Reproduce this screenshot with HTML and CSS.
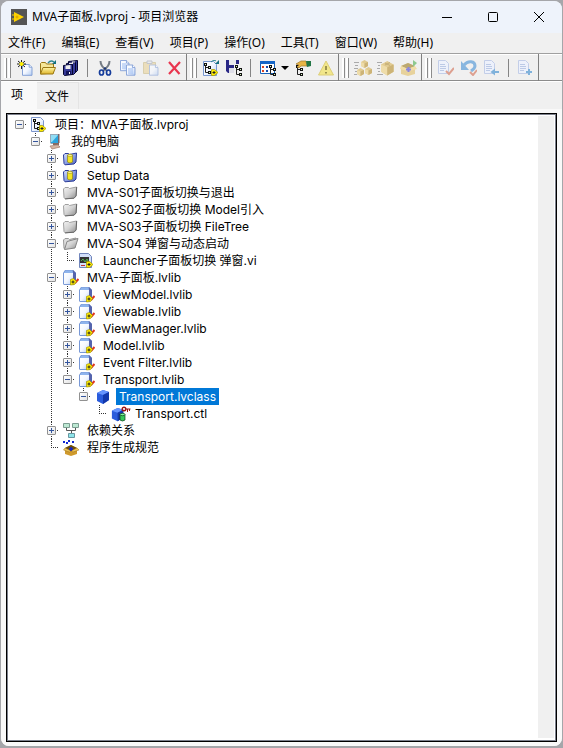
FILE: index.html
```html
<!DOCTYPE html>
<html lang="zh-CN">
<head>
<meta charset="utf-8">
<title>MVA子面板.lvproj - 项目浏览器</title>
<link rel="stylesheet" href="styles.css">
</head>
<body>
<svg class="defs" aria-hidden="true">
  <defs>
    <linearGradient id="metal" x1="0" y1="0" x2="1" y2="1"><stop offset="0" stop-color="#f4f4f4"/><stop offset=".5" stop-color="#d2d2d2"/><stop offset="1" stop-color="#8c8c8c"/></linearGradient>
    <linearGradient id="sheet" x1="0" y1="0" x2="1" y2="1"><stop offset="0" stop-color="#fff"/><stop offset=".5" stop-color="#f3f7ff"/><stop offset="1" stop-color="#b4cdf3"/></linearGradient>
    <linearGradient id="blue" x1="0" y1="0" x2="1" y2="1"><stop offset="0" stop-color="#dfe7ff"/><stop offset=".5" stop-color="#8ea2e6"/><stop offset="1" stop-color="#4c60b8"/></linearGradient>
    <linearGradient id="gold" x1="0" y1="0" x2="0" y2="1"><stop offset="0" stop-color="#fff7a6"/><stop offset="1" stop-color="#dfb52c"/></linearGradient>
    <g id="page"><path d="M0 0h7l3 3v9H0z" fill="url(#sheet)" stroke="#7d9bd4"/><path d="M7 0v3h3" fill="#fff" stroke="#7d9bd4"/></g>
    <g id="twigs"><path d="M1.500 1v8.500h4M1.500 4.500h4" fill="none" stroke="#222"/><path d="M0 0h3v3H0zM4 3h3v3H4zM4 8h3v3H4z" fill="#111"/><path d="M1 1h1v1H1zM5 4h1v1H5zM5 9h1v1H5z" fill="#d9f5c4"/></g>
    <g id="node"><path d="M.5.500h3L7 3.500 3.500 6.500h-3z" fill="#ffed00" stroke="#a39300" stroke-width=".7"/><path d="M1.500 3.500h3M3 2v3" stroke="#222"/></g>
    <g id="box"><path d="M0 2l3.500-2L7 2v4L3.500 8 0 6z" fill="#e1cb92"/><path d="M0 2l3.500 1.500V8L0 6z" fill="#eedca9"/><path d="M3.500 3.500L7 2v4L3.500 8z" fill="#cdb477"/></g>
    <g id="cube"><path d="M2 4l6-3 6 2v8l-6 4-6-3z" fill="#2a5cdc"/><path d="M2 4l6-3 6 2-6 3z" fill="#6594ff"/><path d="M8 6l6-3v8l-6 4z" fill="#1238ac"/></g>

    <symbol id="i-labview" viewBox="0 0 16 16"><path d="M0 0h16v16H0z" fill="#555"/><path d="M3 3l10 5-10 5z" fill="#ffd300"/><path d="M1 6h3M1 10h3" stroke="#ffd300"/><path d="M4.500 8h3M6 6.500v3" stroke="#d69e00"/></symbol>
    <symbol id="i-new" viewBox="0 0 16 16"><use href="#page" transform="translate(5.500 4.500) scale(.95 .9)"/><path d="M0 4h9M4.500 0v9M1 1l7 6M8 1L1 7" stroke="#222"/><path d="M2.500 4h4M4.500 2v4" stroke="#fff000" stroke-width="2"/></symbol>
    <symbol id="i-open" viewBox="0 0 16 16"><path d="M.5 14V3.500l1-1h4l1 1.500h7V13z" fill="#f5e798" stroke="#9a7815"/><path d="M.5 14L3 7.500h12.500L13 14z" fill="url(#gold)" stroke="#9a7815"/><path d="M8 3c2-2.500 4-2.500 6-1" fill="none" stroke="#318993" stroke-width="1.300"/><path d="M16 0v4h-4z" fill="#137080"/></symbol>
    <symbol id="i-saveall" viewBox="0 0 16 16"><g stroke="#05052e" fill="#363a98"><path d="M5.500 1.500l9-1v10l-2 2h-7z"/><path d="M3.500 3.500l9-1v10l-2 2h-7z"/><path d="M.5 5.500l9-1v10l-8 1-1-1z"/></g><path d="M2.500 5.500l5-.5v4h-5zM6 3l4-.5v1.500H6zM9 1.500h3v1H9z" fill="#eee"/><path d="M3 11h5v4H3z" fill="#151558"/><path d="M6 12h1v2H6z" fill="#fff"/></symbol>
    <symbol id="i-cut" viewBox="0 0 16 16"><path d="M3.500 1c0 4 2 6 6.500 10M12.500 1c0 4-2 6-6.500 10" fill="none" stroke="#747b84" stroke-width="2"/><ellipse cx="4.500" cy="12.500" rx="2" ry="2.500" fill="none" stroke="#153c9b" stroke-width="1.700"/><ellipse cx="11.500" cy="12.500" rx="2" ry="2.500" fill="none" stroke="#153c9b" stroke-width="1.700"/><circle cx="8" cy="8.500" r="1.200" fill="#19367a"/></symbol>
    <symbol id="i-copy" viewBox="0 0 16 16"><use href="#page" transform="translate(.5 .5) scale(.85)"/><use href="#page" transform="translate(6.500 5) scale(.85)"/><path d="M2 4h4M2 6h4M2 8h4M8 9h5M8 11h5M8 13h5" stroke="#9abaf0"/></symbol>
    <symbol id="i-paste" viewBox="0 0 16 16"><path d="M.5 2.500h12v11H.5z" fill="#e8d39b" stroke="#caba83"/><path d="M4 3.500V1h5v2.500z" fill="#e5e8ed" stroke="#a6abb9"/><use href="#page" transform="translate(6.500 5) scale(.85)"/></symbol>
    <symbol id="i-delete" viewBox="0 0 16 16"><path d="M3 2l10.500 12M14 2L3 14" stroke="#e9364f" stroke-width="2.200"/></symbol>
    <symbol id="i-projopen" viewBox="0 0 16 16"><path d="M.5 1.500h10l3 3v11H.5z" fill="url(#sheet)" stroke="#7898d0"/><use href="#twigs" transform="translate(1 3)"/><use href="#node" x="8" y="9"/><path d="M8 2c2-2 4-2 5-1" fill="none" stroke="#318993"/><path d="M16 0v4h-4z" fill="#137080"/></symbol>
    <symbol id="i-projsave" viewBox="0 0 16 16"><path d="M0 0h13v13H2l-2-2z" fill="#292785"/><path d="M3 0h7v5H3z" fill="#e9e9ef"/><path d="M3 8h6v5H3z" fill="#dddde7"/><path d="M8 4h8v12H8z" fill="#efefef"/><use href="#twigs" transform="translate(9 5)"/></symbol>
    <symbol id="i-window" viewBox="0 0 16 16"><path d="M.5 1.500h14v12H.5z" fill="#fff" stroke="#1762b8"/><path d="M0 1h15v3H0z" fill="#1767c7"/><path d="M2 6h2v2H2zM2 10h2v2H2z" fill="#da4423"/><path d="M6 6h2v2H6zM6 10h2v2H6zM10 6h2v2h-2z" fill="#184aad"/><use href="#twigs" transform="translate(9 5)"/></symbol>
    <symbol id="i-hand" viewBox="0 0 16 16"><use href="#twigs" transform="translate(1 5)"/><path d="M1 4l5-3h5l1 5H6L4 8 2 7l2-2z" fill="#e9b544" stroke="#a17a2c" stroke-width=".7"/><path d="M11 1h5v5l-4 1z" fill="#237645"/></symbol>
    <symbol id="i-warn" viewBox="0 0 16 16"><path d="M8 1l7.500 14H.5z" fill="#f1e68a" stroke="#dcce78"/><path d="M8 6v4M8 12v1.500" stroke="#877e40" stroke-width="1.600"/></symbol>
    <symbol id="i-boxes" viewBox="0 0 18 16"><path d="M0 2.500h5M1 5.500h3M0 8.500h4M1 11.500h2M0 14.500h3" stroke="#aaa"/><use href="#box" x="7" y="0"/><use href="#box" x="3" y="8"/><use href="#box" x="11" y="7"/></symbol>
    <symbol id="i-box" viewBox="0 0 18 16"><path d="M0 2.500h5M1 5.500h2M0 8.500h3M1 11.500h2M0 14.500h6" stroke="#aaa"/><use href="#box" transform="translate(4 1) scale(1.800)"/><path d="M8 3l5 2.500M13 2.500L8 5" stroke="#c6b078"/></symbol>
    <symbol id="i-boxout" viewBox="0 0 18 16"><path d="M1 6l7-3 7 3v8l-7 2-7-2z" fill="#e7d29c"/><path d="M1 6l7 3 7-3-7-3z" fill="#bca870"/><path d="M1 6l-1 3 7 2 1-2zM15 6l2 3-7 2-2-2z" fill="#f1dda8"/><path d="M6 9.500h5M8.500 7v5" stroke="#8a85e0" stroke-width="2"/><path d="M13 0l4 3-4 4z" fill="#8ec98f"/></symbol>
    <g id="paleform"><path d="M.5.500h7l3 3v10H.5z" fill="#edf1fb" stroke="#c3cee8"/><path d="M2 4.500h5M2 6.500h6M2 8.500h6M2 10.500h4" stroke="#bccae6"/></g>
    <symbol id="i-check" viewBox="0 0 16 16"><use href="#paleform"/><path d="M8 11l3 3 5-6" fill="none" stroke="#dda090" stroke-width="2"/></symbol>
    <symbol id="i-undo" viewBox="0 0 16 16"><path d="M3 5c4-5 11-4 11 1 0 2-1 3-4 5" fill="none" stroke="#88b6df" stroke-width="3"/><path d="M0 1v9h8z" fill="#88b6df"/><path d="M9 12l3 3 4-5" fill="none" stroke="#dda090" stroke-width="2"/></symbol>
    <symbol id="i-back" viewBox="0 0 16 16"><use href="#paleform"/><path d="M15 12H9" stroke="#80b2db" stroke-width="2"/><path d="M11 8.500v7L6.500 12z" fill="#80b2db"/></symbol>
    <symbol id="i-add" viewBox="0 0 16 16"><use href="#paleform"/><path d="M8 12h6M11 9v6" stroke="#80b2db" stroke-width="2"/></symbol>

    <symbol id="i-project" viewBox="0 0 16 16"><path d="M.5.500h9l3 3v11H.5z" fill="url(#sheet)" stroke="#7c96cc"/><use href="#twigs" transform="translate(2 2)"/><use href="#node" x="8" y="8"/></symbol>
    <symbol id="i-computer" viewBox="0 0 16 16"><path d="M3 0h9v9l-1 1H4L3 9z" fill="#93a9bb"/><path d="M4 1h7v8H4z" fill="#2aa5df"/><path d="M4 1h7L5 8H4z" fill="#8fdcf4"/><path d="M11 0h1.500v9H11z" fill="#77656a"/><path d="M6 9h6v2H6z" fill="#876b62"/><path d="M3 12l8-1 2 2-8 2z" fill="#d5b6a3" stroke="#a88476" stroke-width=".8"/></symbol>
    <symbol id="i-autofolder" viewBox="0 0 16 16"><path d="M1 12.500L.5 4 2 2.500h3.500l1 1L13.500 2l-.5 9-2 2-9 .8z" fill="url(#blue)" stroke="#2a3b98"/><path d="M4.500 4v7q2.500 2 5 0V4q-2.500-2-5 0z" fill="#f4e621" stroke="#8f8418" stroke-width=".7"/><ellipse cx="7" cy="4.500" rx="2.300" ry="1" fill="#fff99d" stroke="#8f8418" stroke-width=".5"/></symbol>
    <symbol id="i-folder" viewBox="0 0 16 16"><path d="M1 12.500L.5 4 2 2.500h3.500l1 1L13.500 2l-.5 9-2 2-9 .8z" fill="url(#metal)" stroke="#a0a0a0"/><path d="M13.700 2l-.6 9-2 2.200-9 .7" fill="none" stroke="#666"/></symbol>
    <symbol id="i-folderopen" viewBox="0 0 16 16"><path d="M1 12.500L.5 4 2 2.500h3.500l1 1L13 2v3z" fill="#ddd" stroke="#999"/><path d="M1.500 13.500L4 5.500 15 2.500l-3 9.500z" fill="url(#metal)" stroke="#858585"/></symbol>
    <symbol id="i-vi" viewBox="0 0 16 16"><path d="M.5.500h9l3 3v11H.5z" fill="#d3e0fa" stroke="#7185bb"/><path d="M1 4h9v6H1z" fill="#333"/><path d="M2 8l2-2 2 3 2-3 1 2" fill="none" stroke="#53b653"/><path d="M2 12.500h4" stroke="#c62f2f"/><use href="#node" x="7" y="8"/></symbol>
    <symbol id="i-library" viewBox="0 0 16 16"><path d="M0 3l2-3h8l3 3v10l-3 2H1l-1-1z" fill="#7898d6"/><path d="M10 3V0l3 3v10l-3 2z" fill="#5564ad"/><path d="M1 3h9v11H1z" fill="url(#sheet)"/><path d="M1 3l1.500-2.500H9L10 3z" fill="#8eb4ed"/><path d="M12 13l3.500-4" stroke="#e03621" stroke-width="2"/><path d="M7.500 9.500l3-1 3 3-2 3-4 .5z" fill="#ffed00" stroke="#a39300" stroke-width=".7"/><path d="M8.500 12h3M10 10.500v3" stroke="#222"/></symbol>
    <symbol id="i-class" viewBox="0 0 16 16"><use href="#cube"/></symbol>
    <symbol id="i-control" viewBox="0 0 20 16"><use href="#cube" transform="translate(-1 1) scale(.95)"/><path d="M9 8.500v5.500q2.500 2 5 0V8.500z" fill="#36c75b" stroke="#093c17" stroke-width=".7"/><ellipse cx="11.500" cy="8.500" rx="2.500" ry="1.200" fill="#7cf399" stroke="#093c17" stroke-width=".7"/><circle cx="13" cy="3" r="1.800" fill="none" stroke="#9b1515" stroke-width="1.400"/><path d="M15 3h4.500M16.500 3v3M18.500 3v2" stroke="#9b1515"/></symbol>
    <symbol id="i-deps" viewBox="0 0 16 16"><path d="M3.500 5v2.500h9V5M8.500 7v4" fill="none" stroke="#555"/><path d="M.5.500h6v4h-6zM9.500.500h6v4h-6z" fill="#bde9d3" stroke="#7d9e92"/><path d="M5.500 10.500h6v4h-6z" fill="#8ee5ea" stroke="#6796a0"/></symbol>
    <symbol id="i-build" viewBox="0 0 16 16"><path d="M2 8l6-3 6 3v6l-6 2-6-2z" fill="#d09a2c"/><path d="M2 8l6 3 6-3-6-3z" fill="#6b4e10"/><path d="M2 8l-1.500 2 6 2L8 11zM14 8l2 2-6 2-2-1z" fill="#efc95f" stroke="#9a6f18" stroke-width=".5"/><path d="M6 9h4M8 7v4" stroke="#1523c8" stroke-width="1.500"/><path d="M0 1h2v2H0zM5 0h2v2H5zM9 1h2v2H9zM3 2h2v2H3z" fill="#1026d2"/></symbol>
  </defs>
</svg>
<main class="window">
  <header class="titlebar">
    <svg class="icon"><use href="#i-labview"/></svg>
    <h1 class="title">MVA子面板.lvproj - 项目浏览器</h1>
    <button class="caption" aria-label="最小化"><svg class="glyph" viewBox="0 0 12 12"><path d="M1 6.500h10"/></svg></button>
    <button class="caption" aria-label="最大化"><svg class="glyph" viewBox="0 0 12 12"><rect x="1.500" y="1.500" width="9" height="9" rx="1"/></svg></button>
    <button class="caption" aria-label="关闭"><svg class="glyph" viewBox="0 0 12 12"><path d="M1 1l10 10M11 1L1 11"/></svg></button>
  </header>
  <nav class="menubar">
    <button class="menu">文件(F)</button><button class="menu">编辑(E)</button><button class="menu">查看(V)</button><button class="menu">项目(P)</button><button class="menu">操作(O)</button><button class="menu">工具(T)</button><button class="menu">窗口(W)</button><button class="menu">帮助(H)</button>
  </nav>
  <div class="toolbar">
    <div class="group">
      <button class="tool" aria-label="新建"><svg class="icon"><use href="#i-new"/></svg></button>
      <button class="tool" aria-label="打开"><svg class="icon"><use href="#i-open"/></svg></button>
      <button class="tool" aria-label="全部保存"><svg class="icon"><use href="#i-saveall"/></svg></button>
      <span class="separator"></span>
      <button class="tool" aria-label="剪切"><svg class="icon"><use href="#i-cut"/></svg></button>
      <button class="tool" aria-label="复制"><svg class="icon"><use href="#i-copy"/></svg></button>
      <button class="tool" aria-label="粘贴" disabled><svg class="icon faded"><use href="#i-paste"/></svg></button>
      <button class="tool" aria-label="删除"><svg class="icon"><use href="#i-delete"/></svg></button>
    </div>
    <div class="group">
      <button class="tool" aria-label="打开项目"><svg class="icon"><use href="#i-projopen"/></svg></button>
      <button class="tool" aria-label="保存项目"><svg class="icon"><use href="#i-projsave"/></svg></button>
      <span class="separator"></span>
      <button class="tool" aria-label="筛选"><svg class="icon"><use href="#i-window"/></svg></button>
      <button class="tool drop" aria-label="筛选选项"><svg class="arrow" viewBox="0 0 8 4"><path d="M0 0h8L4 4z"/></svg></button>
      <button class="tool" aria-label="属性"><svg class="icon"><use href="#i-hand"/></svg></button>
      <button class="tool" aria-label="冲突" disabled><svg class="icon"><use href="#i-warn"/></svg></button>
    </div>
    <div class="group">
      <button class="tool" aria-label="全部生成" disabled><svg class="icon wide"><use href="#i-boxes"/></svg></button>
      <button class="tool" aria-label="生成" disabled><svg class="icon wide"><use href="#i-box"/></svg></button>
      <button class="tool" aria-label="部署" disabled><svg class="icon wide"><use href="#i-boxout"/></svg></button>
    </div>
    <div class="group">
      <button class="tool" aria-label="签出" disabled><svg class="icon"><use href="#i-check"/></svg></button>
      <button class="tool" aria-label="撤消签出" disabled><svg class="icon"><use href="#i-undo"/></svg></button>
      <button class="tool" aria-label="签入" disabled><svg class="icon"><use href="#i-back"/></svg></button>
      <span class="separator"></span>
      <button class="tool" aria-label="添加" disabled><svg class="icon"><use href="#i-add"/></svg></button>
    </div>
  </div>
  <div class="tabs" role="tablist">
    <button class="tab active" role="tab" aria-selected="true">项</button><button class="tab" role="tab" aria-selected="false">文件</button>
  </div>
  <section class="panel">
    <div class="treebox">
      <ul class="tree">
        <li><div class="row"><button class="toggle" aria-label="折叠"></button><svg class="icon"><use href="#i-project"/></svg><span class="label">项目：MVA子面板.lvproj</span></div>
          <ul>
            <li><div class="row"><button class="toggle" aria-label="折叠"></button><svg class="icon"><use href="#i-computer"/></svg><span class="label">我的电脑</span></div>
              <ul>
                <li><div class="row"><button class="toggle plus" aria-label="展开"></button><svg class="icon"><use href="#i-autofolder"/></svg><span class="label">Subvi</span></div></li>
                <li><div class="row"><button class="toggle plus" aria-label="展开"></button><svg class="icon"><use href="#i-autofolder"/></svg><span class="label">Setup Data</span></div></li>
                <li><div class="row"><button class="toggle plus" aria-label="展开"></button><svg class="icon"><use href="#i-folder"/></svg><span class="label">MVA-S01子面板切换与退出</span></div></li>
                <li><div class="row"><button class="toggle plus" aria-label="展开"></button><svg class="icon"><use href="#i-folder"/></svg><span class="label">MVA-S02子面板切换 Model引入</span></div></li>
                <li><div class="row"><button class="toggle plus" aria-label="展开"></button><svg class="icon"><use href="#i-folder"/></svg><span class="label">MVA-S03子面板切换 FileTree</span></div></li>
                <li><div class="row"><button class="toggle" aria-label="折叠"></button><svg class="icon"><use href="#i-folderopen"/></svg><span class="label">MVA-S04 弹窗与动态启动</span></div>
                  <ul>
                    <li><div class="row leaf"><svg class="icon"><use href="#i-vi"/></svg><span class="label">Launcher子面板切换 弹窗.vi</span></div></li>
                  </ul>
                </li>
                <li><div class="row"><button class="toggle" aria-label="折叠"></button><svg class="icon"><use href="#i-library"/></svg><span class="label">MVA-子面板.lvlib</span></div>
                  <ul>
                    <li><div class="row"><button class="toggle plus" aria-label="展开"></button><svg class="icon"><use href="#i-library"/></svg><span class="label">ViewModel.lvlib</span></div></li>
                    <li><div class="row"><button class="toggle plus" aria-label="展开"></button><svg class="icon"><use href="#i-library"/></svg><span class="label">Viewable.lvlib</span></div></li>
                    <li><div class="row"><button class="toggle plus" aria-label="展开"></button><svg class="icon"><use href="#i-library"/></svg><span class="label">ViewManager.lvlib</span></div></li>
                    <li><div class="row"><button class="toggle plus" aria-label="展开"></button><svg class="icon"><use href="#i-library"/></svg><span class="label">Model.lvlib</span></div></li>
                    <li><div class="row"><button class="toggle plus" aria-label="展开"></button><svg class="icon"><use href="#i-library"/></svg><span class="label">Event Filter.lvlib</span></div></li>
                    <li><div class="row"><button class="toggle" aria-label="折叠"></button><svg class="icon"><use href="#i-library"/></svg><span class="label">Transport.lvlib</span></div>
                      <ul>
                        <li><div class="row"><button class="toggle" aria-label="折叠"></button><svg class="icon"><use href="#i-class"/></svg><span class="label selected">Transport.lvclass</span></div>
                          <ul>
                            <li><div class="row leaf"><svg class="icon overlaid"><use href="#i-control"/></svg><span class="label">Transport.ctl</span></div></li>
                          </ul>
                        </li>
                      </ul>
                    </li>
                  </ul>
                </li>
                <li><div class="row"><button class="toggle plus" aria-label="展开"></button><svg class="icon"><use href="#i-deps"/></svg><span class="label">依赖关系</span></div></li>
                <li><div class="row leaf"><svg class="icon"><use href="#i-build"/></svg><span class="label">程序生成规范</span></div></li>
              </ul>
            </li>
          </ul>
        </li>
      </ul>
      <div class="scrolltrack"></div>
    </div>
  </section>
</main>
</body>
</html>
```

FILE: styles.css
```css
* { box-sizing: border-box; }

body {
  margin: 0;
  height: 100vh;
  padding: 1px 1px 2px 1px;
  background: #a5a6aa;
  color: #000;
  font: 12px/16px "Noto Sans", "Noto Sans CJK SC", sans-serif;
}

button {
  padding: 0;
  border: 0;
  background: none;
  color: inherit;
  font: inherit;
}

.defs {
  position: absolute;
  width: 0;
  height: 0;
}

.window {
  display: flex;
  flex-direction: column;
  height: 100%;
  overflow: hidden;
  border-radius: 8px;
  background: #f0f0f0;
}

.icon {
  display: block;
  flex: none;
  width: 16px;
  height: 16px;
}

.icon.wide { width: 18px; }
.faded { opacity: .6; }

.titlebar {
  display: flex;
  align-items: center;
  height: 32px;
  padding-left: 10px;
  background: #eef3fb;
}

.title {
  flex: 1;
  margin: 0 0 0 5px;
  font: inherit;
  white-space: nowrap;
}

.caption {
  display: grid;
  place-items: center;
  width: 46px;
  height: 32px;
}

.glyph {
  width: 12px;
  height: 12px;
  fill: none;
  stroke: #000;
}

.menubar {
  display: flex;
  align-items: center;
  gap: 16px;
  height: 20px;
  padding-left: 7px;
}

.toolbar {
  display: flex;
  height: 29px;
  border-top: 1px solid #a0a0a0;
  border-bottom: 1px solid #fff;
  box-shadow: inset 0 1px #fff, inset 0 -1px #8c8c8c;
}

.group {
  display: flex;
  align-items: center;
  padding: 1px 1px 0 12px;
  border-right: 1px solid #808080;
  background:
    linear-gradient(#8c8c8c, #8c8c8c) 5px 4px / 1px 20px no-repeat,
    linear-gradient(#8c8c8c, #8c8c8c) 9px 4px / 1px 20px no-repeat,
    linear-gradient(#fff, #fff) 3px 4px / 2px 20px no-repeat,
    linear-gradient(#fff, #fff) 7px 4px / 2px 20px no-repeat;
}

.tool {
  display: grid;
  place-items: center;
  width: 23px;
  height: 24px;
}

.drop { width: 12px; }

.arrow {
  width: 8px;
  height: 4px;
}

.separator {
  width: 1px;
  height: 18px;
  margin: 0 5px;
  background: #858585;
}

.tabs {
  display: flex;
  height: 27px;
}

.tab {
  padding: 2px 9px 0 8px;
  border: 1px solid #e4e4e4;
  border-width: 1px 1px 0 0;
}

.tab.active {
  padding: 0 13px 2px 10px;
  border-color: #f9f9f9;
  background: #f9f9f9;
}

.panel {
  display: flex;
  flex: 1;
  min-height: 0;
  padding: 4px 5px 4px 5px;
  background: #f9f9f9;
}

.treebox {
  display: flex;
  flex: 1;
  padding: 1px 2px 3px 1px;
  border: 1px solid #000;
  box-shadow: inset 0 0 0 1px #7c808c;
  background: #fff;
}

.scrolltrack {
  width: 16px;
  margin-top: 1px;
  background: #f0f0f0;
}

.tree,
.tree ul {
  margin: 0;
  padding: 0;
  list-style: none;
}

.tree {
  flex: 1;
  padding: 1px 0 0 7px;
  font-family: Inter, "Noto Sans CJK SC", sans-serif;
}

.tree ul { padding-left: 16px; }
.tree li { position: relative; }

/* vertical branch line behind the toggles */
.tree ul > li::before {
  content: "";
  position: absolute;
  top: 0;
  bottom: 0;
  left: 4px;
  width: 1px;
  background: repeating-linear-gradient(#333 0 1px, transparent 1px 2px);
}

.tree ul > li:last-child::before {
  bottom: auto;
  height: 9px;
}

.row {
  position: relative;
  display: flex;
  align-items: center;
  height: 17px;
  white-space: nowrap;
  background: repeating-linear-gradient(90deg, #333 0 1px, transparent 1px 2px) 4px 8px / 8px 1px no-repeat;
}

.leaf { padding-left: 16px; }

.row .label {
  height: 17px;
  margin-left: 5px;
  padding: 0 3px;
  line-height: 17px;
}

.row .selected {
  background: #0078d7;
  color: #fff;
}

.toggle {
  width: 9px;
  height: 9px;
  margin-right: 7px;
  border: 1px solid #919191;
  border-radius: 1px;
  background:
    linear-gradient(#34559d, #34559d) center / 5px 1px no-repeat,
    linear-gradient(135deg, #fff, #e4e4e4);
}

.toggle.plus {
  background:
    linear-gradient(#34559d, #34559d) center / 5px 1px no-repeat,
    linear-gradient(#34559d, #34559d) center / 1px 5px no-repeat,
    linear-gradient(135deg, #fff, #e4e4e4);
}

.icon.overlaid {
  width: 20px;
  margin-right: -4px;
}
```
